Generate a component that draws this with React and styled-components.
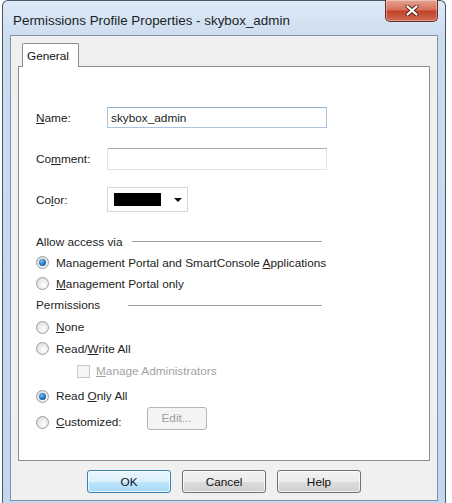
import styled, { createGlobalStyle } from "styled-components";

const GlobalStyle = createGlobalStyle`
   html, body {
      margin: 0;
      padding: 0;
      background: #ffffff;
   }
   body {
      font-family: 'Liberation Sans', Arial, sans-serif;
      font-size: 11.8px;
      color: #111;
   }
`

const Window = styled.div`
   margin-left: 2px;
   width: 444px;
   height: 503px;
   box-sizing: border-box;
   border: 1px solid #48586b;
   border-bottom: none;
   border-radius: 6px 6px 0 0;
   background: linear-gradient(to bottom, #dde9f6 0px, #cbdcef 40px, #c3d7ee 100%);
   display: flex;
   flex-direction: column;
   padding: 0 7px 2px 7px;
`

const TitleBar = styled.div`
   display: flex;
   justify-content: space-between;
   height: 34px;
   padding-left: 3px;
`

const Title = styled.span`
   font-size: 13.4px;
   color: #1b1f24;
   align-self: center;
   margin-top: 5px;
`

const CloseButton = styled.div`
   width: 53px;
   height: 22px;
   box-sizing: border-box;
   margin-top: -1px;
   border: 1px solid #6d2a20;
   border-top: none;
   border-radius: 0 0 5px 5px;
   background: linear-gradient(to bottom, #e6a393 0%, #d6725c 45%, #c2432a 55%, #cf6a52 100%);
   box-shadow: inset 0 0 0 1px rgba(255,255,255,0.35);
   display: flex;
   align-items: center;
   justify-content: center;
`

const Client = styled.div`
   flex: 1;
   border: 1px solid #7e91a8;
   background: #f0f0f0;
   padding: 7px 7px 6px 7px;
   display: flex;
   flex-direction: column;
`

const TabStrip = styled.div`
   display: flex;
   padding-left: 4px;
   position: relative;
   z-index: 1;
   margin-bottom: -1px;
`

const Tab = styled.div`
   width: 57px;
   height: 24px;
   box-sizing: border-box;
   background: #ffffff;
   border: 1px solid #898c95;
   border-bottom: none;
   border-radius: 2px 2px 0 0;
   display: flex;
   align-items: center;
   padding: 1px 0 0 4px;
`

const Panel = styled.div`
   height: 395px;
   box-sizing: border-box;
   border: 1px solid #898c95;
   background: #ffffff;
   padding: 40px 0 0 17px;
   display: flex;
   flex-direction: column;
`

const FieldRow = styled.div`
   display: grid;
   grid-template-columns: 71px auto;
   align-items: center;
   margin-top: ${p => p.$mt || 0}px;
`

const Label = styled.span`
   color: #222;
`

const TextInput = styled.div`
   width: 220px;
   height: ${p => p.$h}px;
   box-sizing: border-box;
   border: 1px solid #dbdfe6;
   border-top-color: #abadb3;
   border-left-color: #e2e3ea;
   background: #ffffff;
   display: flex;
   align-items: center;
   padding-left: 3px;
   color: #222;
   ${p => p.$focus && `
      border-color: #a9c4de;
      border-top-color: #8fb0cf;
   `}
`

const ColorPicker = styled.div`
   width: 81px;
   height: 25px;
   box-sizing: border-box;
   border: 1px solid #d4d6da;
   background: #ffffff;
   display: flex;
   align-items: center;
   padding-left: 6px;
   gap: 13px;
`

const Swatch = styled.span`
   width: 47px;
   height: 13px;
   background: #000;
`

const Arrow = styled.span`
   width: 0;
   height: 0;
   border-left: 4px solid transparent;
   border-right: 4px solid transparent;
   border-top: 4px solid #111;
   margin-top: 1px;
`

const Options = styled.div`
   width: 286px;
   display: flex;
   flex-direction: column;
   margin-top: 19px;
`

const Row = styled.div`
   height: ${p => p.$h}px;
   display: flex;
   align-items: center;
   padding-left: ${p => p.$indent || 0}px;
   color: ${p => p.$disabled ? "#a3a3a3" : "#222"};
`

const Text = styled.span`
   white-space: nowrap;
`

const Line = styled.span`
   flex: 1;
   height: 1px;
   background: #a0a0a0;
   border-bottom: 1px solid #ffffff;
   margin-left: ${p => p.$ml}px;
   margin-top: 1px;
`

const Radio = styled.span`
   width: 13px;
   height: 13px;
   box-sizing: border-box;
   border-radius: 50%;
   border: 1px solid #9a9c9f;
   background: radial-gradient(circle at 60% 65%, #ffffff 0%, #e9e9e9 55%, #cfd0d2 100%);
   margin-right: 7px;
   display: flex;
   align-items: center;
   justify-content: center;
   flex-shrink: 0;
   &::after {
      content: "";
      width: 7px;
      height: 7px;
      border-radius: 50%;
      display: ${p => p.$checked ? "block" : "none"};
      background: radial-gradient(circle at 40% 35%, #7fc0f3 0%, #2a7bc6 45%, #12457c 100%);
   }
`

const Checkbox = styled.span`
   width: 13px;
   height: 13px;
   box-sizing: border-box;
   border: 1px solid #c4c6c9;
   background: #f5f5f5;
   margin-right: 6px;
`

const SmallButton = styled.div`
   width: 60px;
   height: 23px;
   box-sizing: border-box;
   margin-left: 25px;
   margin-top: -8px;
   border: 1px solid #b3b6ba;
   border-radius: 3px;
   background: #f4f4f4;
   color: #9d9d9d;
   display: flex;
   align-items: center;
   justify-content: center;
`

const Footer = styled.div`
   display: flex;
   justify-content: center;
   gap: 11px;
   margin-top: 9px;
`

const Button = styled.div`
   width: 84px;
   height: 23px;
   box-sizing: border-box;
   border: 1px solid ${p => p.$default ? "#3c7fb1" : "#707070"};
   border-radius: 3px;
   background: ${p => p.$default
      ? "linear-gradient(to bottom, #eaf6fd 0%, #d9f0fc 50%, #bee6fd 51%, #a7d9f5 100%)"
      : "linear-gradient(to bottom, #f2f2f2 0%, #ebebeb 50%, #dddddd 51%, #cfcfcf 100%)"};
   box-shadow: inset 0 0 0 1px rgba(255,255,255,0.7);
   display: flex;
   align-items: center;
   justify-content: center;
   color: #111;
`

const U = styled.span`
   text-decoration: underline;
`

export default function App() {
   return (
      <>
         <GlobalStyle />
         <Window>
            <TitleBar>
               <Title>Permissions Profile Properties - skybox_admin</Title>
               <CloseButton>
                  <svg width="14" height="11" viewBox="0 0 14 11">
                     <path d="M2.5 1.5 L11.5 9.5 M11.5 1.5 L2.5 9.5" stroke="#5a2218" strokeWidth="4" strokeLinecap="round" />
                     <path d="M2.5 1.5 L11.5 9.5 M11.5 1.5 L2.5 9.5" stroke="#ffffff" strokeWidth="2.2" strokeLinecap="round" />
                  </svg>
               </CloseButton>
            </TitleBar>
            <Client>
               <TabStrip>
                  <Tab>General</Tab>
               </TabStrip>
               <Panel>
                  <FieldRow>
                     <Label><U>N</U>ame:</Label>
                     <TextInput $h={21} $focus>skybox_admin</TextInput>
                  </FieldRow>
                  <FieldRow $mt={20}>
                     <Label>Co<U>m</U>ment:</Label>
                     <TextInput $h={22} />
                  </FieldRow>
                  <FieldRow $mt={17}>
                     <Label>Co<U>l</U>or:</Label>
                     <ColorPicker>
                        <Swatch />
                        <Arrow />
                     </ColorPicker>
                  </FieldRow>
                  <Options>
                     <Row $h={21}>
                        <Text>Allow access via</Text>
                        <Line $ml={9} />
                     </Row>
                     <Row $h={21}>
                        <Radio $checked />
                        <Text>Management Portal and SmartConsole <U>A</U>pplications</Text>
                     </Row>
                     <Row $h={21}>
                        <Radio />
                        <Text><U>M</U>anagement Portal only</Text>
                     </Row>
                     <Row $h={22}>
                        <Text>Permissions</Text>
                        <Line $ml={28} />
                     </Row>
                     <Row $h={22}>
                        <Radio />
                        <Text><U>N</U>one</Text>
                     </Row>
                     <Row $h={21}>
                        <Radio />
                        <Text>Read/<U>W</U>rite All</Text>
                     </Row>
                     <Row $h={24} $indent={41} $disabled>
                        <Checkbox />
                        <Text><U>M</U>anage Administrators</Text>
                     </Row>
                     <Row $h={26}>
                        <Radio $checked />
                        <Text>Read <U>O</U>nly All</Text>
                     </Row>
                     <Row $h={26}>
                        <Radio />
                        <Text><U>C</U>ustomized:</Text>
                        <SmallButton>Edit...</SmallButton>
                     </Row>
                  </Options>
               </Panel>
               <Footer>
                  <Button $default>OK</Button>
                  <Button>Cancel</Button>
                  <Button>Help</Button>
               </Footer>
            </Client>
         </Window>
      </>
   );
}
